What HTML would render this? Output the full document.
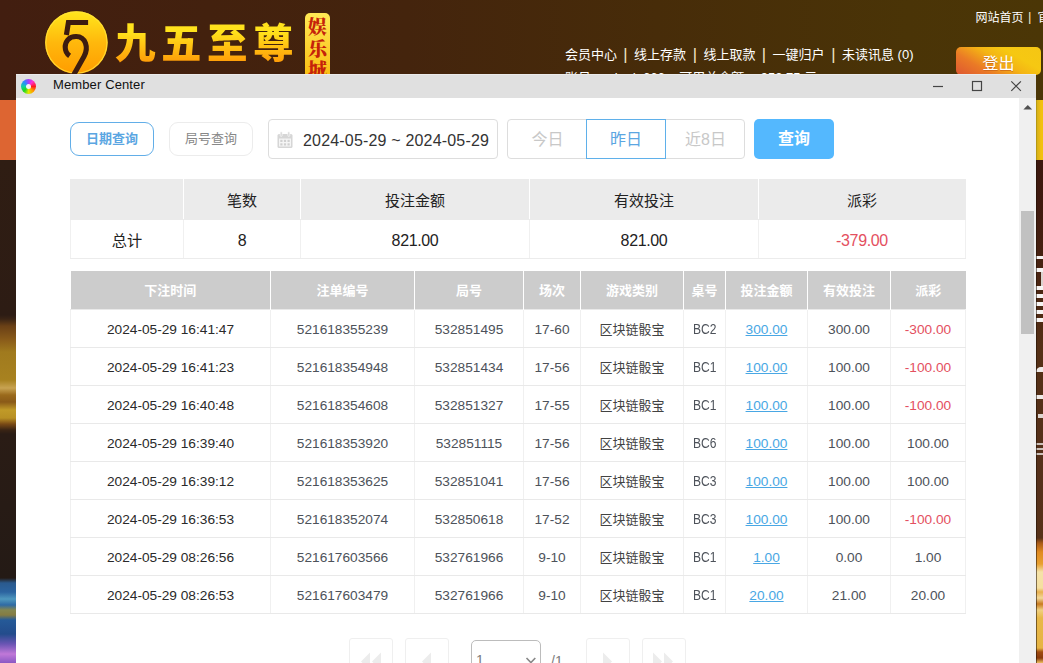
<!DOCTYPE html>
<html lang="zh-CN">
<head>
<meta charset="utf-8">
<title>Member Center</title>
<style>
*{box-sizing:border-box;margin:0;padding:0}
html,body{width:1043px;height:663px;overflow:hidden}
body{position:relative;font-family:"Liberation Sans","Noto Sans CJK SC",sans-serif;background:#2c1b12;color:#222}
.abs{position:absolute}
/* ---------- site behind the window ---------- */
#site-top{left:0;top:0;width:1043px;height:100px;background:linear-gradient(90deg,#421e10 0%,#43210e 20%,#44240d 39%,#472c09 63%,#4a3407 87%,#4b3606 100%)}
#site-orange{left:0;top:100px;width:16px;height:60px;background:#dd6532}
#site-left{left:0;top:160px;width:16px;height:503px;background:linear-gradient(180deg,#2f1d13 0,#2d1c14 155px,#3a2415 159px,#6a4016 166px,#8a5c1a 180px,#a07a1e 192px,#a88220 220px,#c8a352 228px,#9a6a1c 235px,#8a5a18 242px,#c09a28 250px,#b89024 258px,#7a4a15 264px,#3a2414 270px,#2a1c15 274px,#241a15 418px,#2a5a8e 423px,#2c64a0 432px,#4f98be 439px,#2f6aa4 445px,#84864f 450px,#857c42 455px,#255a98 460px,#234c8c 474px,#6a55b4 484px,#c078d8 494px,#8a58c4 503px)}
#site-yellow{left:1036px;top:100px;width:7px;height:60px;background:linear-gradient(90deg,#a88a10 0,#d8b418 1.5px,#e6b716 3px,#f2c10f 5px)}
#edge{left:1036px;top:160px;width:1px;height:503px;background:rgba(30,14,4,.55)}
#site-right{left:1036px;top:160px;width:7px;height:503px;background:linear-gradient(180deg,#3c180e 0,#3f1a0f 40px,#4a2512 120px,#553016 190px,#55301a 330px,#573218 378px,#a85a18 383px,#e08a20 392px,#e8a030 404px,#f5e2a8 412px,#f5dfa0 428px,#e8b050 432px,#f3d898 438px,#c87a20 444px,#f0d080 450px,#e8b848 458px,#e6b444 488px,#a04a10 492px,#8a3a0c 498px,#f0c060 503px)}
#site-right i{position:absolute;left:0;width:7px;height:4px;background:#fff;opacity:.95}
#logo-text{left:115px;top:14px;font-family:"Liberation Sans","Noto Sans CJK SC",sans-serif;font-weight:900;font-size:40.5px;line-height:60px;letter-spacing:5.5px;white-space:nowrap;background:linear-gradient(180deg,#ffe21c 30%,#ff9d08 80%);-webkit-background-clip:text;background-clip:text;color:transparent}
#badge{left:305px;top:13px;width:25px;height:70px;border-radius:5px;background:linear-gradient(180deg,#ffe955,#f9b90a);color:#c5220a;font-family:"Liberation Serif","Noto Serif CJK SC",serif;font-weight:900;font-size:19px;line-height:21.5px;text-align:center;padding-top:4px}
.nv{color:#fff;font-size:13px;line-height:18px;white-space:nowrap}
.sp{color:#f3e6c4;font-size:16.5px!important;margin-top:-1.2px;margin-left:-.3px}
.sp0{color:#f3e6c4;font-size:13.2px!important;margin-top:-.6px;margin-left:0}
#logout{left:956px;top:47px;width:85px;height:28px;border-radius:5px;background:linear-gradient(30deg,#e05c30 5%,#ea7a26 28%,#f4b414 52%,#f6c812 70%,#f5c614 100%);color:#fff;font-size:16px;line-height:33.5px;text-align:center;text-shadow:0 1px 0 rgba(190,90,20,.6)}
/* ---------- window ---------- */
#win{left:16px;top:74px;width:1020px;height:589px;background:#fff}
#titlebar{left:0;top:0;width:1020px;height:24px;background:#e0e0e0;box-shadow:inset 0 1px 0 #ebebeb;font-size:13px;line-height:22px;color:#111}
#titlebar .t{position:absolute;left:37px;top:0;letter-spacing:.12px}
#ticon{left:4.8px;top:4.6px;width:15px;height:15px;border-radius:50%;background:conic-gradient(from 0deg,#a040ff,#ff30d0 40deg,#ff1a1a 90deg,#ff9a00 135deg,#e0e800 180deg,#20d820 225deg,#10d0a0 270deg,#2a8bff 315deg,#a040ff)}
#ticon:after{content:"";position:absolute;left:5px;top:5px;width:5px;height:5px;border-radius:50%;background:#f4f4f4}
#scroll{left:1003px;top:24px;width:17px;height:565px;background:#f0f0f0}
#thumb{left:2px;top:113px;width:13px;height:123px;background:#c1c1c1}
/* ---------- toolbar ---------- */
.btn{border:1px solid #ddd;border-radius:4px;background:#fff;text-align:center;white-space:nowrap}
#b1{left:70px;top:122px;width:84px;height:34px;border-radius:9px;border-color:#62aee8;color:#5ba6e2;font-weight:bold;font-size:13px;line-height:32px}
#b2{left:169px;top:122px;width:84px;height:34px;border-radius:9px;border-color:#ececec;color:#888;font-size:13px;line-height:32px}
#date{left:268px;top:119px;width:230px;height:40px;font-size:16px;letter-spacing:.18px;line-height:41px;color:#333;text-align:left}
#date .tx{position:absolute;left:34px;top:0}
#grp{left:507px;top:119px;width:238px;height:40px}
#grp div{position:absolute;top:0;height:40px;font-size:16px;line-height:40px;color:#c8c8c8;text-align:center}
#q{left:754px;top:119px;width:80px;height:40px;background:#54b8fe;border:0;border-radius:5px;color:#fff;font-weight:bold;font-size:16px;line-height:40px}
/* ---------- tables ---------- */
table{border-collapse:collapse;table-layout:fixed;position:absolute}
#sum{left:70px;top:179px;width:895px}
#sum td,#sum th{height:40px;border:1px solid #ebebeb;text-align:center;font-size:15.4px;font-weight:normal;color:#222}
#sum td{height:39px;font-size:16px;letter-spacing:-.35px;padding-top:3px}
#sum td:first-child{font-size:15.2px;letter-spacing:0;padding-top:0}
#sum th{font-size:15px!important}
#sum th{background:#ebebeb;border-color:#ebebeb #fff #ebebeb #fff}
#sum th:first-child{border-left-color:#ebebeb}
#sum th:last-child{border-right-color:#ebebeb}
#sum td{border-color:#ececec #f0f0f0}
#main{left:70px;top:271px;width:895px}
#main th{height:38px;background:#ccc;color:#fff;font-size:13px;font-weight:bold;border-left:1px solid #fff;text-align:center}
#main th:first-child{border-left:0}
#main td{height:38px;border:1px solid #f0f0f0;border-top-color:#e9e9e9;border-bottom-color:#e9e9e9;text-align:center;font-size:13.7px;line-height:20px;color:#4d525a;padding-top:3px}
#main td:first-child{color:#2a2a2a}
#main a{color:#49a7e4;text-decoration:underline}
.neg{color:#e4505f!important}
.blk{color:#424242!important;font-size:13px!important}
.bc b{display:inline-block;font-weight:normal;font-size:14px;transform:scaleX(.86)}
/* ---------- pager ---------- */
.pg{top:638px;width:44px;height:44px;border:1px solid #efefef;border-radius:3px;background:#fff}
#sel{left:471px;top:640px;width:70px;height:40px;border:1px solid #bcbcbc;border-radius:5px;background:#fff;font-size:14px;line-height:38px;color:#7c7c7c;padding-left:4px}
</style>
</head>
<body>
<div class="abs" id="site-top"></div>
<div class="abs" id="site-orange"></div>
<div class="abs" id="site-left"></div>
<div class="abs" id="site-yellow"></div>
<div class="abs" id="site-right"><i style="top:96px;height:3px"></i><i style="top:108px"></i><i style="top:126px"></i><i style="top:134px"></i><i style="top:142px"></i><i style="top:150px"></i><i style="top:158px"></i><i style="top:112px;left:5px;width:2px;height:15px;opacity:.8"></i><i style="top:207px;height:5px;border-radius:6px 0 0 0;opacity:.9"></i><i style="top:235px;height:4px;opacity:.9"></i><i style="top:254px;height:4px;left:2px;width:5px;opacity:.8"></i><i style="top:283px;height:2px;opacity:.7"></i><i style="top:288px;height:2px;opacity:.7"></i><i style="top:293px;height:2px;opacity:.7"></i></div>

<div class="abs" id="edge"></div>
<svg class="abs" style="left:44px;top:9px" width="66" height="68" viewBox="0 0 66 68">
  <defs>
    <linearGradient id="g1" x1="0" y1="0" x2="0" y2="1">
      <stop offset="0" stop-color="#ffe71c"/><stop offset="0.5" stop-color="#ffb80c"/><stop offset="1" stop-color="#ff9c00"/>
    </linearGradient>
  </defs>
  <circle cx="32.4" cy="33.5" r="31.3" fill="url(#g1)"/><circle cx="32.4" cy="33.5" r="30.6" fill="none" stroke="#ffe23a" stroke-width="1.2" opacity=".8"/>
  <path d="M44.1 13.5 H24.4 L22.4 26" fill="none" stroke="#3d1c10" stroke-width="5.1" stroke-linejoin="miter"/>
  <path d="M29.6 66 L40 47.5 C45 38.5 41.5 27.6 32.2 27.5 C24.5 27.4 21.2 33 21.2 38 C21.2 42 23 45 25.6 46.8" fill="none" stroke="#3d1c10" stroke-width="5.1"/>
</svg>
<div class="abs" id="logo-text">九五至尊</div>
<div class="abs" id="badge">娱<br>乐<br>城</div>
<div class="abs nv" style="left:975.5px;top:9px;font-size:12px">网站首页</div>
<div class="abs nv sp0" style="left:1028px;top:9px">|</div>
<div class="abs nv" style="left:1037.5px;top:9px;font-size:12px">官方</div>
<div class="abs nv" style="left:565px;top:46px">会员中心</div>
<div class="abs nv sp" style="left:623.5px;top:46px">|</div>
<div class="abs nv" style="left:634px;top:46px">线上存款</div>
<div class="abs nv sp" style="left:693px;top:46px">|</div>
<div class="abs nv" style="left:703.5px;top:46px">线上取款</div>
<div class="abs nv sp" style="left:762px;top:46px">|</div>
<div class="abs nv" style="left:772.5px;top:46px">一键归户</div>
<div class="abs nv sp" style="left:831.5px;top:46px">|</div>
<div class="abs nv" style="left:842px;top:46px">未读讯息 (0)</div>
<div class="abs nv" style="left:565px;top:69px">账号： abcde666 &nbsp;&nbsp; 可用总余额： 953.75 元</div>
<div class="abs" id="logout">登出</div>

<div class="abs" id="win">
  <div class="abs" id="titlebar">
    <div class="abs" id="ticon"></div>
    <span class="t">Member Center</span>
    <svg class="abs" style="left:910px;top:0" width="110" height="24" viewBox="0 0 110 24">
      <path d="M7 12.5h10" stroke="#444" stroke-width="1.2" fill="none"/>
      <rect x="46.5" y="7.5" width="9" height="9" stroke="#444" stroke-width="1.2" fill="none"/>
      <path d="M85.3 7.3l9.6 9.6M94.9 7.3l-9.6 9.6" stroke="#444" stroke-width="1.2" fill="none"/>
    </svg>
  </div>
  <div class="abs" id="scroll"><div class="abs" id="thumb"></div>
    <svg class="abs" style="left:0;top:0" width="17" height="17" viewBox="0 0 17 17"><path d="M4.4 11.6L8.8 7 13.2 11.6z" fill="#505050"/></svg>
  </div>
</div>

<div class="abs btn" id="b1">日期查询</div>
<div class="abs btn" id="b2">局号查询</div>
<div class="abs btn" id="date">
  <svg class="abs" style="left:7px;top:10.5px" width="18" height="18" viewBox="0 0 18 18">
    <rect x="1.5" y="3" width="15" height="14" rx="1.5" fill="#d6d6d6"/>
    <rect x="3" y="7.5" width="12" height="8" fill="#fff" opacity=".75"/>
    <rect x="4.2" y="0.8" width="2" height="4.6" rx="1" fill="#d6d6d6" stroke="#fff" stroke-width=".6"/>
    <rect x="11.8" y="0.8" width="2" height="4.6" rx="1" fill="#d6d6d6" stroke="#fff" stroke-width=".6"/>
    <g fill="#d0d0d0"><rect x="4.3" y="8.8" width="2.2" height="2.2"/><rect x="7.9" y="8.8" width="2.2" height="2.2"/><rect x="11.5" y="8.8" width="2.2" height="2.2"/><rect x="4.3" y="12.3" width="2.2" height="2.2"/><rect x="7.9" y="12.3" width="2.2" height="2.2"/><rect x="11.5" y="12.3" width="2.2" height="2.2"/></g>
  </svg>
  <span class="tx">2024-05-29 ~ 2024-05-29</span></div>
<div class="abs btn" id="grp">
  <div style="left:0;width:79px">今日</div>
  <div style="left:78px;width:80px;top:-1px;height:40px;border:1px solid #5fb0ea;color:#5ba6e2;background:#fff">昨日</div>
  <div style="left:158px;width:79px">近8日</div>
</div>
<div class="abs btn" id="q">查询</div>

<table id="sum">
  <colgroup><col style="width:113px"><col style="width:117px"><col style="width:229px"><col style="width:229px"><col style="width:207px"></colgroup>
  <tr><th></th><th>笔数</th><th>投注金额</th><th>有效投注</th><th>派彩</th></tr>
  <tr><td>总计</td><td>8</td><td>821.00</td><td>821.00</td><td class="neg">-379.00</td></tr>
</table>

<table id="main">
  <colgroup><col style="width:200px"><col style="width:144px"><col style="width:109px"><col style="width:57px"><col style="width:103px"><col style="width:42px"><col style="width:82px"><col style="width:83px"><col style="width:75px"></colgroup>
  <tr><th>下注时间</th><th>注单编号</th><th>局号</th><th>场次</th><th>游戏类别</th><th>桌号</th><th>投注金额</th><th>有效投注</th><th>派彩</th></tr>
  <tr><td>2024-05-29 16:41:47</td><td>521618355239</td><td>532851495</td><td>17-60</td><td class="blk">区块链骰宝</td><td class="bc"><b>BC2</b></td><td><a>300.00</a></td><td>300.00</td><td class="neg">-300.00</td></tr>
  <tr><td>2024-05-29 16:41:23</td><td>521618354948</td><td>532851434</td><td>17-56</td><td class="blk">区块链骰宝</td><td class="bc"><b>BC1</b></td><td><a>100.00</a></td><td>100.00</td><td class="neg">-100.00</td></tr>
  <tr><td>2024-05-29 16:40:48</td><td>521618354608</td><td>532851327</td><td>17-55</td><td class="blk">区块链骰宝</td><td class="bc"><b>BC1</b></td><td><a>100.00</a></td><td>100.00</td><td class="neg">-100.00</td></tr>
  <tr><td>2024-05-29 16:39:40</td><td>521618353920</td><td>532851115</td><td>17-56</td><td class="blk">区块链骰宝</td><td class="bc"><b>BC6</b></td><td><a>100.00</a></td><td>100.00</td><td>100.00</td></tr>
  <tr><td>2024-05-29 16:39:12</td><td>521618353625</td><td>532851041</td><td>17-56</td><td class="blk">区块链骰宝</td><td class="bc"><b>BC3</b></td><td><a>100.00</a></td><td>100.00</td><td>100.00</td></tr>
  <tr><td>2024-05-29 16:36:53</td><td>521618352074</td><td>532850618</td><td>17-52</td><td class="blk">区块链骰宝</td><td class="bc"><b>BC3</b></td><td><a>100.00</a></td><td>100.00</td><td class="neg">-100.00</td></tr>
  <tr><td>2024-05-29 08:26:56</td><td>521617603566</td><td>532761966</td><td>9-10</td><td class="blk">区块链骰宝</td><td class="bc"><b>BC1</b></td><td><a>1.00</a></td><td>0.00</td><td>1.00</td></tr>
  <tr><td>2024-05-29 08:26:53</td><td>521617603479</td><td>532761966</td><td>9-10</td><td class="blk">区块链骰宝</td><td class="bc"><b>BC1</b></td><td><a>20.00</a></td><td>21.00</td><td>20.00</td></tr>
</table>

<div class="abs pg" style="left:349px"><svg width="41" height="41" viewBox="0 -1.5 41 41"><path d="M11 21l9-9v18zM22 21l9-9v18z" fill="#ececec"/></svg></div>
<div class="abs pg" style="left:405px"><svg width="41" height="41" viewBox="0 -1.5 41 41"><path d="M16 21l9-9v18z" fill="#ececec"/></svg></div>
<div class="abs" id="sel">1<svg class="abs" style="left:53px;top:13.5px" width="12" height="12" viewBox="0 0 12 12"><path d="M1.5 3l4.4 4.6L10.3 3" stroke="#888" stroke-width="1.6" fill="none"/></svg></div>
<div class="abs" style="left:551px;top:652.5px;font-size:14px;line-height:16px;color:#7c7c7c">/1</div>
<div class="abs pg" style="left:586px"><svg width="41" height="41" viewBox="0 -1.5 41 41"><path d="M25 21l-9-9v18z" fill="#ececec"/></svg></div>
<div class="abs pg" style="left:642px"><svg width="41" height="41" viewBox="0 -1.5 41 41"><path d="M19 21l-9-9v18zM30 21l-9-9v18z" fill="#ececec"/></svg></div>
</body>
</html>
